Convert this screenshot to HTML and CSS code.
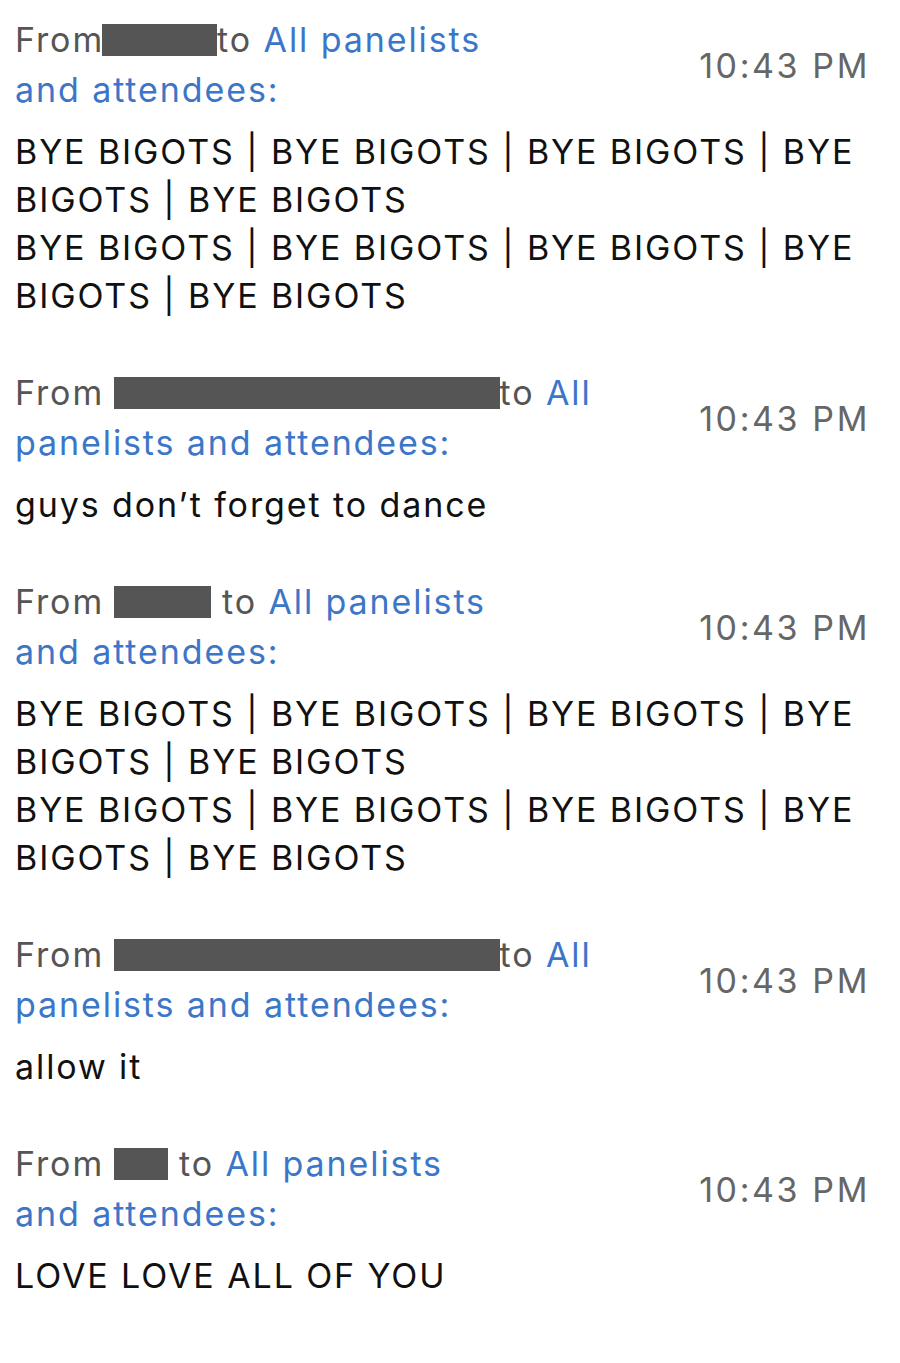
FILE: index.html
```html
<!DOCTYPE html>
<html lang="en">
<head>
    <meta charset="UTF-8">
    <title>Chat</title>
    <link rel="stylesheet" href="styles.css">
</head>
<body>
    <div class="chat">
        <div class="msg">
            <div class="msg-head">
                <div class="sender">From<span class="redact redact-a"></span>to <span class="to">All panelists<br>and attendees:</span></div>
                <div class="time">10:43 PM</div>
            </div>
            <div class="msg-body">
                <p>BYE BIGOTS | BYE BIGOTS | BYE BIGOTS | BYE BIGOTS | BYE BIGOTS</p>
                <p>BYE BIGOTS | BYE BIGOTS | BYE BIGOTS | BYE BIGOTS | BYE BIGOTS</p>
            </div>
        </div>

        <div class="msg">
            <div class="msg-head">
                <div class="sender">From <span class="redact redact-b"></span>to <span class="to">All<br>panelists and attendees:</span></div>
                <div class="time">10:43 PM</div>
            </div>
            <div class="msg-body">
                <p>guys don’t forget to dance</p>
            </div>
        </div>

        <div class="msg">
            <div class="msg-head">
                <div class="sender">From <span class="redact redact-c"></span> to <span class="to">All panelists<br>and attendees:</span></div>
                <div class="time">10:43 PM</div>
            </div>
            <div class="msg-body">
                <p>BYE BIGOTS | BYE BIGOTS | BYE BIGOTS | BYE BIGOTS | BYE BIGOTS</p>
                <p>BYE BIGOTS | BYE BIGOTS | BYE BIGOTS | BYE BIGOTS | BYE BIGOTS</p>
            </div>
        </div>

        <div class="msg">
            <div class="msg-head">
                <div class="sender">From <span class="redact redact-b"></span>to <span class="to">All<br>panelists and attendees:</span></div>
                <div class="time">10:43 PM</div>
            </div>
            <div class="msg-body">
                <p>allow it</p>
            </div>
        </div>

        <div class="msg">
            <div class="msg-head">
                <div class="sender">From <span class="redact redact-d"></span> to <span class="to">All panelists<br>and attendees:</span></div>
                <div class="time">10:43 PM</div>
            </div>
            <div class="msg-body">
                <p>LOVE LOVE ALL OF YOU</p>
            </div>
        </div>
    </div>
</body>
</html>
```

FILE: styles.css
```css
body {
    margin: 0;
    background-color: #ffffff;
    font-family: Inter, "Noto Sans", sans-serif;
    font-size: 34px;
    letter-spacing: 1.9px;
    color: #111111;
}
.chat {
    padding: 15px 30px 0 15px;
    display: flex;
    flex-direction: column;
    gap: 48px;
}
.msg-head {
    display: flex;
    justify-content: space-between;
    align-items: center;
}
.sender {
    color: #555555;
    line-height: 50px;
}
.to {
    color: #3b76c9;
}
.redact {
    display: inline-block;
    height: 32px;
    vertical-align: -4px;
    background-color: #555555;
}
.redact-a { width: 115px; margin-left: -2px; }
.redact-b { width: 386px; margin-left: -2px; }
.redact-c { width: 97px; margin-left: -2px; }
.redact-d { width: 54px; margin-left: -2px; }
.time {
    color: #666666;
    letter-spacing: 2.6px;
}
.msg-body {
    margin-top: 13px;
}
.msg-body p {
    margin: 0;
    line-height: 48px;
}
```
